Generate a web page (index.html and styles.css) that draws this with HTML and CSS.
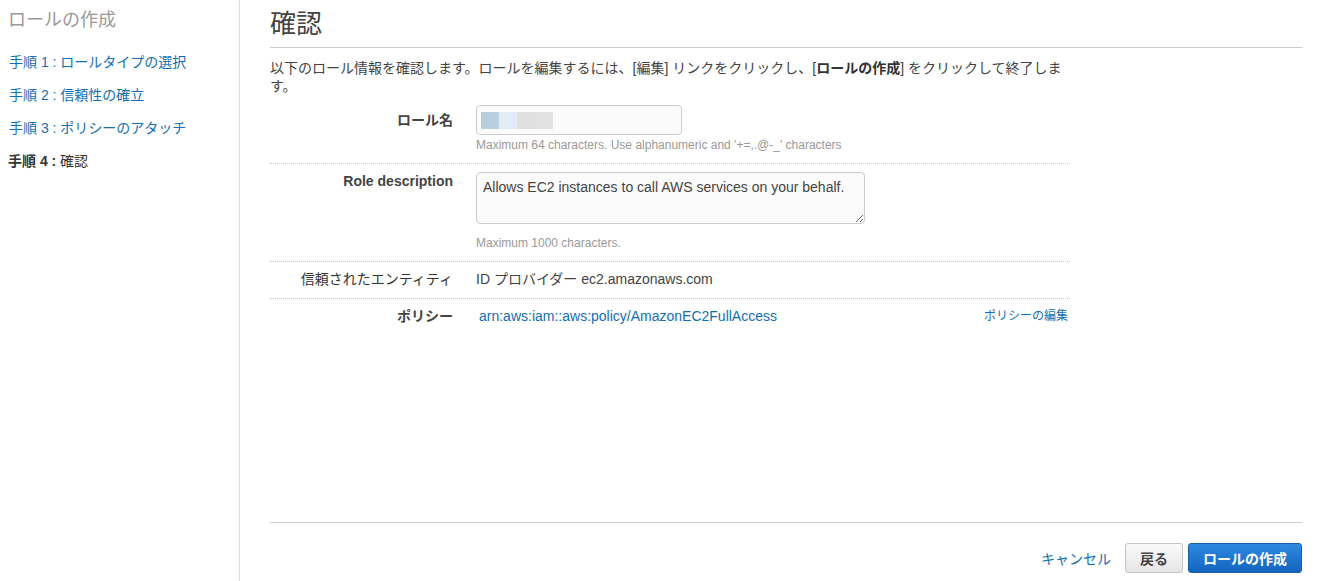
FILE: index.html
```html
<!DOCTYPE html>
<html lang="ja">
  <head>
    <meta charset="UTF-8" />
    <meta name="viewport" content="width=device-width, initial-scale=1">
    <title>ロールの作成</title>
    <link rel="stylesheet" href="styles.css">
  </head>
  <body>
    <div class="wrap">
      <div class="side">
        <p class="side_tit">ロールの作成</p>
        <ul class="step_list">
          <li><a href="#">手順 1 : ロールタイプの選択</a></li>
          <li><a href="#">手順 2 : 信頼性の確立</a></li>
          <li><a href="#">手順 3 : ポリシーのアタッチ</a></li>
          <li class="on"><b>手順 4 :</b> 確認</li>
        </ul>
      </div>
      <div class="main">
        <h1 class="main_tit">確認</h1>
        <p class="intro">以下のロール情報を確認します。ロールを編集するには、[編集] リンクをクリックし、[<span class="strong">ロールの作成</span>] をクリックして終了します。</p>
        <div class="form">
          <div class="row">
            <div class="label lb_input">ロール名</div>
            <div class="val">
              <div class="fake_input">
                <span class="blur b1"></span><span class="blur b2"></span><span class="blur b3"></span><span class="blur b4"></span>
              </div>
              <p class="help">Maximum 64 characters. Use alphanumeric and '+=,.@-_' characters</p>
            </div>
          </div>
          <div class="row">
            <div class="label">Role description</div>
            <div class="val">
              <textarea class="txt_area" readonly>Allows EC2 instances to call AWS services on your behalf.</textarea>
              <p class="help help_area">Maximum 1000 characters.</p>
            </div>
          </div>
          <div class="row">
            <div class="label normal">信頼されたエンティティ</div>
            <div class="val">ID プロバイダー ec2.amazonaws.com</div>
          </div>
          <div class="row last">
            <div class="label">ポリシー</div>
            <div class="val val_split">
              <a href="#" class="policy">arn:aws:iam::aws:policy/AmazonEC2FullAccess</a>
              <a href="#" class="edit_link">ポリシーの編集</a>
            </div>
          </div>
        </div>
        <div class="footer">
          <a href="#" class="cancel">キャンセル</a>
          <button class="btn btn_back">戻る</button>
          <button class="btn btn_create">ロールの作成</button>
        </div>
      </div>
    </div>
  </body>
</html>
```

FILE: styles.css
```css
* {padding:0; margin:0; box-sizing: border-box;}
body, html {height: 100%;}
body {font-family: "Liberation Sans", "Noto Sans CJK JP", sans-serif; font-size: 14px; color: #444; background: #fff;}
a {color: #146eb4; text-decoration: none;}
ul {list-style: none;}
.wrap {display: flex; min-height: 100%;}
.side {width: 240px; flex-shrink: 0; border-right: 1px solid #ddd; padding: 8px 8px 0;}
.side_tit {font-size: 18px; line-height: 24px; color: #999;}
.step_list {margin-top: 14px;}
.step_list li {line-height: 33px; font-size: 14px;}
.step_list li a {padding-left: 1px;}
.step_list li.on {color: #333;}
.main {flex: 1; display: flex; flex-direction: column; padding: 0 17px 0 30px;}
.main_tit {font-size: 26px; font-weight: normal; line-height: 34px; padding: 7px 0 6px; border-bottom: 1px solid #ccc; color: #444;}
.intro {max-width: 800px; margin-top: 11px; line-height: 18px;}
.intro .strong {font-weight: bold; color: #333;}
.form {width: 800px; margin-top: 2px;}
.row {display: grid; grid-template-columns: 183px 1fr; column-gap: 23px; padding: 8px 0 10px; border-bottom: 1px dotted #ccc;}
.row.last {border-bottom: 0;}
.label {text-align: right; font-weight: bold; line-height: 18px; color: #444;}
.label.normal {font-weight: normal; color: #333;}
.label.lb_input {padding-top: 6px;}
.val {line-height: 18px;}
.fake_input {width: 206px; height: 30px; border: 1px solid #ccc; border-radius: 4px; background: #fbfbfb; display: flex; align-items: center; padding-left: 4px;}
.blur {width: 18px; height: 17px; display: block;}
.b1 {background: #b8cfe0;}
.b2 {background: #e2ecf6;}
.b3 {background: #e0e0e0;}
.b4 {background: #e3e2e0;}
.help {font-size: 12px; line-height: 16px; color: #999; margin-top: 2px;}
.help.help_area {margin-top: 11px;}
.txt_area {display: block; width: 389px; height: 52px; border: 1px solid #ccc; border-radius: 4px; background: #fbfbfb; padding: 5px 6px; font-family: inherit; font-size: 14px; line-height: 18px; color: #444; resize: vertical;}
.val_split {display: flex; justify-content: space-between;}
.policy {padding-left: 3px;}
.edit_link {font-size: 12px; padding-right: 2px;}
.footer {margin-top: auto; border-top: 1px solid #ccc; padding: 20px 0 8px; display: flex; justify-content: flex-end; align-items: center;}
.cancel {font-size: 14px; margin-right: 14px;}
.btn {height: 30px; border-radius: 3px; font-family: inherit; font-size: 14px; font-weight: bold; cursor: pointer; padding: 0 12px;}
.btn_back {width: 58px; background: linear-gradient(#fafafa, #e6e6e6); border: 1px solid #c4c4c4; color: #444;}
.btn_create {width: 114px; margin-left: 5px; background: linear-gradient(#2d8ae0, #1464c0); border: 1px solid #1a5faa; color: #fff;}
```
